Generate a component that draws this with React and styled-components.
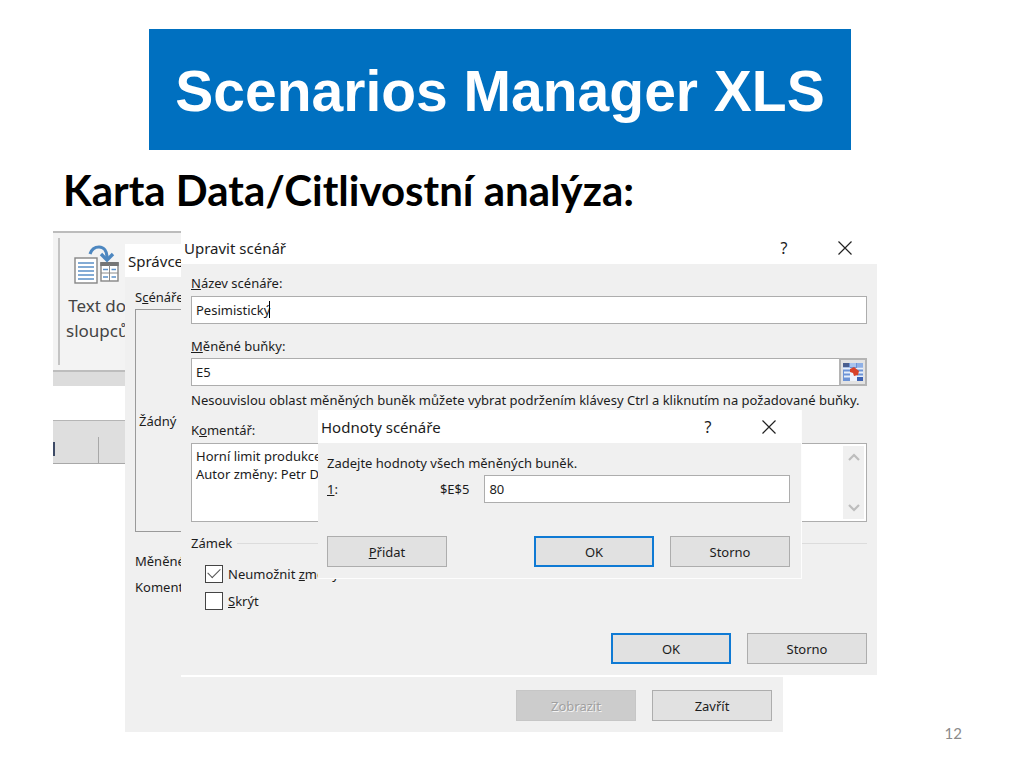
import React from "react";
import styled, { createGlobalStyle, css } from "styled-components";

const App = () => {
  return (
    <>
      <GlobalStyle />
      <Slide>
        <Banner>Scenarios Manager XLS</Banner>
        <Heading>Karta Data/Citlivostní analýza:</Heading>
        <Stage>
          <Ribbon />
          <ManagerWindow />
          <EditWindow />
          <ValuesWindow />
        </Stage>
        <PageNumber>12</PageNumber>
      </Slide>
    </>
  );
};

const Ribbon = () => {
  return (
    <Sheet>
      <RibbonTab>
        <RibbonGroup>
          <RibbonButton type="button">
            <ColumnsIcon />
            <span>Text do</span>
            <span>sloupců</span>
          </RibbonButton>
        </RibbonGroup>
      </RibbonTab>
      <RibbonFoot />
      <ColumnHeaders>
        <HeaderCell>
          <HeaderMark />
        </HeaderCell>
      </ColumnHeaders>
    </Sheet>
  );
};

const ManagerWindow = () => {
  return (
    <Manager aria-label="Správce">
      <TitleBar>
        <h3>Správce</h3>
      </TitleBar>
      <ManagerBody>
        <p>
          S<u>c</u>énáře
        </p>
        <ScenarioList>Žádný</ScenarioList>
        <Details>
          <p>Měněné</p>
          <p>Koment</p>
        </Details>
        <Buttons>
          <Button type="button" disabled>
            Zobrazit
          </Button>
          <Button type="button">Zavřít</Button>
        </Buttons>
      </ManagerBody>
    </Manager>
  );
};

const EditWindow = () => {
  return (
    <Edit aria-label="Upravit scénář">
      <TitleBar>
        <h3>Upravit scénář</h3>
        <WindowControls />
      </TitleBar>
      <EditBody>
        <Label htmlFor="name">
          <u>N</u>ázev scénáře:
        </Label>
        <NameBox>
          <Input id="name" defaultValue="Pesimistický" />
          <Caret />
        </NameBox>
        <Label htmlFor="cells" $spaced>
          <u>M</u>ěněné buňky:
        </Label>
        <RangeBox>
          <Input id="cells" defaultValue="E5" />
          <RangeButton type="button" aria-label="Sbalit">
            <RangeIcon />
          </RangeButton>
        </RangeBox>
        <Hint>
          Nesouvislou oblast měněných buněk můžete vybrat podržením klávesy Ctrl
          a kliknutím na požadované buňky.
        </Hint>
        <Label htmlFor="comment">
          K<u>o</u>mentář:
        </Label>
        <CommentBox>
          <textarea
            id="comment"
            defaultValue={"Horní limit produkce\nAutor změny: Petr D"}
          />
          <ScrollBar>
            <Chevron up />
            <Chevron />
          </ScrollBar>
        </CommentBox>
        <LockGroup>
          <legend>Zámek</legend>
          <Check>
            <input type="checkbox" defaultChecked />
            <span>
              Neumožnit <u>z</u>měny
            </span>
          </Check>
          <Check>
            <input type="checkbox" />
            <span>
              <u>S</u>krýt
            </span>
          </Check>
        </LockGroup>
        <Buttons>
          <Button type="button" $primary>
            OK
          </Button>
          <Button type="button">Storno</Button>
        </Buttons>
      </EditBody>
    </Edit>
  );
};

const ValuesWindow = () => {
  return (
    <Values aria-label="Hodnoty scénáře">
      <TitleBar>
        <h3>Hodnoty scénáře</h3>
        <WindowControls />
      </TitleBar>
      <ValuesBody>
        <p>Zadejte hodnoty všech měněných buněk.</p>
        <ValueRow>
          <label htmlFor="value">
            <u>1</u>:
          </label>
          <span>$E$5</span>
          <Input id="value" defaultValue="80" />
        </ValueRow>
        <Buttons>
          <Button type="button" $first>
            <u>P</u>řidat
          </Button>
          <Button type="button" $primary>
            OK
          </Button>
          <Button type="button">Storno</Button>
        </Buttons>
      </ValuesBody>
    </Values>
  );
};

const WindowControls = () => {
  return (
    <Controls>
      <button type="button">?</button>
      <button type="button" aria-label="Zavřít">
        <svg width="14" height="14" viewBox="0 0 14 14">
          <path d="M0.5 0.5L13.5 13.5M13.5 0.5L0.5 13.5" stroke="#222" strokeWidth="1.2" />
        </svg>
      </button>
    </Controls>
  );
};

const Chevron = ({ up }) => {
  return (
    <svg width="12" height="8" viewBox="0 0 12 8">
      <path
        d={up ? "M1 7L6 2L11 7" : "M1 1L6 6L11 1"}
        fill="none"
        stroke="#bdbdbd"
        strokeWidth="2.2"
      />
    </svg>
  );
};

const ColumnsIcon = () => {
  return (
    <svg width="46" height="40" viewBox="0 0 46 40">
      <rect x="1" y="13" width="22" height="25" fill="#fff" stroke="#858585" strokeWidth="1.4" />
      <path
        d="M4 18H20M4 22H20M4 26H20M4 30H20M4 34H20"
        stroke="#5b90c8"
        strokeWidth="1.3"
      />
      <rect x="27" y="18" width="17" height="18" fill="#fff" stroke="#858585" strokeWidth="1.4" />
      <rect x="26.3" y="17" width="18.4" height="4" fill="#757575" />
      <path d="M35.5 20V36M27 28H44" stroke="#8a8a8a" />
      <path d="M29 24.5H34M37.5 24.5H42M29 32H34M37.5 32H42" stroke="#5b90c8" strokeWidth="1.3" />
      <path d="M16 9C18 3 22 2 25 2C30 2 33 6 33 13" fill="none" stroke="#4d87c0" strokeWidth="3.2" />
      <path d="M27 9L33 15L39 9" fill="none" stroke="#4d87c0" strokeWidth="3.4" />
    </svg>
  );
};

const RangeIcon = () => {
  return (
    <svg width="20" height="18" viewBox="0 0 20 18">
      <rect width="20" height="18" fill="#6c93d6" />
      <rect width="6" height="4" fill="#4a5f8f" />
      <rect x="7" width="6" height="4" fill="#a9c4ee" />
      <rect x="14" width="6" height="4" fill="#8fb0e6" />
      <path
        d="M0 5.5H7M1 9.5H7M1 13.5H7M14 5.5H20M15 9.5H20M14 13.5H20"
        stroke="#e6effc"
        strokeWidth="2"
      />
      <path d="M7 5H14V18H7Z" fill="#f0f4fb" />
      <path d="M14 14H20V18H14Z" fill="#3c62b4" />
      <path d="M7 6L11 4L16 8L15 12L11 13L10 10L7 9Z" fill="#d8432a" />
    </svg>
  );
};

const GlobalStyle = createGlobalStyle`
  * {
    box-sizing: border-box;
  }

  body {
    margin: 0;
    background: #fff;
    color: #1c1c1c;
    font-family: "Noto Sans", "Open Sans", sans-serif;
    font-size: 13px;
    line-height: 18px;
  }

  h1, h2, h3, p {
    margin: 0;
    font-weight: normal;
  }

  button, input, textarea {
    font: inherit;
    color: inherit;
  }
`;

const Slide = styled.main`
  position: relative;
  display: flex;
  flex-direction: column;
  min-height: 100vh;
  padding-top: 29px;
  overflow: hidden;
`;

const Banner = styled.h1`
  margin: 0 173px 0 149px;
  padding: 30px 0 27px;
  background: #0070c0;
  color: #fff;
  font: bold 57px/64px "Liberation Sans", Arial, sans-serif;
  text-align: center;
  white-space: nowrap;
`;

const Heading = styled.h2`
  margin: 16px 63px 17px;
  color: #000;
  font: bold 42px/48px Lato, sans-serif;
`;

const Stage = styled.div`
  position: relative;
  flex: 1;
`;

const PageNumber = styled.footer`
  position: absolute;
  right: 62px;
  bottom: 26px;
  color: #8b8b8b;
  font: 15px/18px Lato, sans-serif;
`;

/* spreadsheet behind the dialogs */
const Sheet = styled.div`
  width: 128px;
  margin-left: 53px;
  overflow: hidden;
`;

const RibbonTab = styled.div`
  padding: 5px 0 5px 5px;
  background: #f3f3f3;
  border-top: 2px solid #bcbcbc;
  border-bottom: 2px solid #bdbdbd;
`;

const RibbonGroup = styled.div`
  display: flex;
  padding: 7px 0 22px 6px;
  border-left: 2px solid #c4c4c4;
`;

const RibbonButton = styled.button`
  display: flex;
  flex-direction: column;
  align-items: center;
  padding: 0;
  background: none;
  border: 0;
  color: #444;
  font-size: 17px;
  line-height: 25px;

  svg {
    margin-bottom: 8px;
  }
`;

const RibbonFoot = styled.div`
  height: 14px;
  margin-bottom: 34px;
  background: #dcdcdc;
`;

const ColumnHeaders = styled.div`
  display: flex;
  align-items: flex-end;
  height: 44px;
  background: #dedede;
  border-top: 1px solid #b5b5b5;
  border-bottom: 1px solid #a8a8a8;
`;

const HeaderCell = styled.div`
  width: 46px;
  height: 26px;
  padding-top: 5px;
  border-right: 1px solid #a8a8a8;
`;

const HeaderMark = styled.div`
  width: 2px;
  height: 14px;
  background: #3d4a66;
`;

/* dialogs */
const Window = styled.section`
  position: absolute;
  display: flex;
  flex-direction: column;
  background: #f0f0f0;
`;

const Manager = styled(Window)`
  left: 125px;
  right: 241px;
  top: 13px;
`;

const Edit = styled(Window)`
  left: 181px;
  right: 147px;
  top: 0;
  border-bottom: 2px solid #fff;
`;

const Values = styled(Window)`
  left: 318px;
  right: 222px;
  top: 179px;
  border: solid #fdfdfd;
  border-width: 0 1px 1px 0;
`;

const TitleBar = styled.header`
  display: flex;
  align-items: center;
  justify-content: space-between;
  height: 33px;
  padding-left: 3px;
  background: #fff;

  h3 {
    font-size: 15px;
  }
`;

const Controls = styled.div`
  display: flex;
  padding-right: 9px;

  button {
    display: flex;
    align-items: center;
    justify-content: center;
    width: 46px;
    height: 30px;
    padding: 0;
    background: none;
    border: 0;
    font-size: 16px;
  }

  button:first-child {
    margin-right: 15px;
  }
`;

const ManagerBody = styled.div`
  padding: 11px 11px 11px 10px;
`;

const EditBody = styled.div`
  display: flex;
  flex-direction: column;
  padding: 10px 10px 11px;
`;

const ValuesBody = styled.div`
  padding: 11px 11px 11px 9px;
`;

const Label = styled.label`
  margin-top: ${(props) => (props.$spaced ? "13px" : "0")};
`;

const ScenarioList = styled.div`
  display: flex;
  align-items: center;
  height: 223px;
  margin: 3px 0 20px;
  padding-left: 3px;
  border: 1px solid #9a9a9a;
`;

const Details = styled.div`
  display: grid;
  gap: 8px;
  margin-bottom: 94px;
`;

const Input = styled.input`
  width: 100%;
  height: 28px;
  padding: 0 4px;
  background: #fff;
  border: 1px solid #adadad;
  outline: none;
`;

const NameBox = styled.div`
  position: relative;
  display: flex;
  margin-top: 4px;
`;

const Caret = styled.span`
  position: absolute;
  left: 78px;
  top: 5px;
  width: 1px;
  height: 17px;
  background: #000;
`;

const RangeBox = styled.div`
  display: flex;
  margin-top: 3px;
`;

const RangeButton = styled.button`
  display: flex;
  flex: none;
  align-items: center;
  justify-content: center;
  width: 28px;
  height: 28px;
  margin-left: -1px;
  padding: 0;
  background: #e3e3e3;
  border: 2px solid #b4b4b4;
`;

const Hint = styled.p`
  margin: 5px 0 12px;
  white-space: nowrap;
`;

const CommentBox = styled.div`
  display: flex;
  height: 79px;
  margin-top: 4px;
  padding: 2px;
  background: #fff;
  border: 1px solid #adadad;

  textarea {
    flex: 1;
    padding: 1px 2px;
    border: 0;
    outline: none;
    resize: none;
    overflow: hidden;
    background: none;
  }
`;

const ScrollBar = styled.div`
  display: flex;
  flex-direction: column;
  align-items: center;
  justify-content: space-between;
  width: 21px;
  padding: 7px 0;
  background: #f0f0f0;
`;

const LockGroup = styled.fieldset`
  margin: 12px 0 19px;
  padding: 8px 0 0 14px;
  border: 0;
  border-top: 1px solid #dcdcdc;

  legend {
    margin-left: -14px;
    padding: 0 5px 0 0;
  }
`;

const Check = styled.label`
  display: flex;
  align-items: center;
  height: 27px;

  input {
    appearance: none;
    display: grid;
    place-items: center;
    width: 18px;
    height: 18px;
    margin: 0 5px 0 0;
    background: #fff;
    border: 1px solid #444;
  }

  input:checked::before {
    content: "";
    width: 11px;
    height: 6px;
    margin-bottom: 4px;
    border: solid #555;
    border-width: 0 0 1px 1px;
    rotate: -45deg;
  }
`;

const Buttons = styled.div`
  display: flex;
  justify-content: flex-end;
  gap: 16px;
`;

const Button = styled.button`
  width: 120px;
  height: 31px;
  margin-right: ${(props) => (props.$first ? "auto" : "0")};
  padding: 0;
  background: #e1e1e1;
  border: 1px solid #adadad;

  ${(props) =>
    props.$primary &&
    css`
      border: 2px solid #0f7ad4;
    `}

  &:disabled {
    background: #cccccc;
    border-color: #c6c6c6;
    color: #a0a0a0;
    text-shadow: 1px 1px 0 #f4f4f4;
  }
`;

const ValueRow = styled.div`
  display: flex;
  align-items: center;
  margin: 3px 0 33px;

  label {
    flex: 1;
  }

  span {
    margin-right: 15px;
  }

  input {
    flex: none;
    width: 66%;
  }
`;

export default App;
